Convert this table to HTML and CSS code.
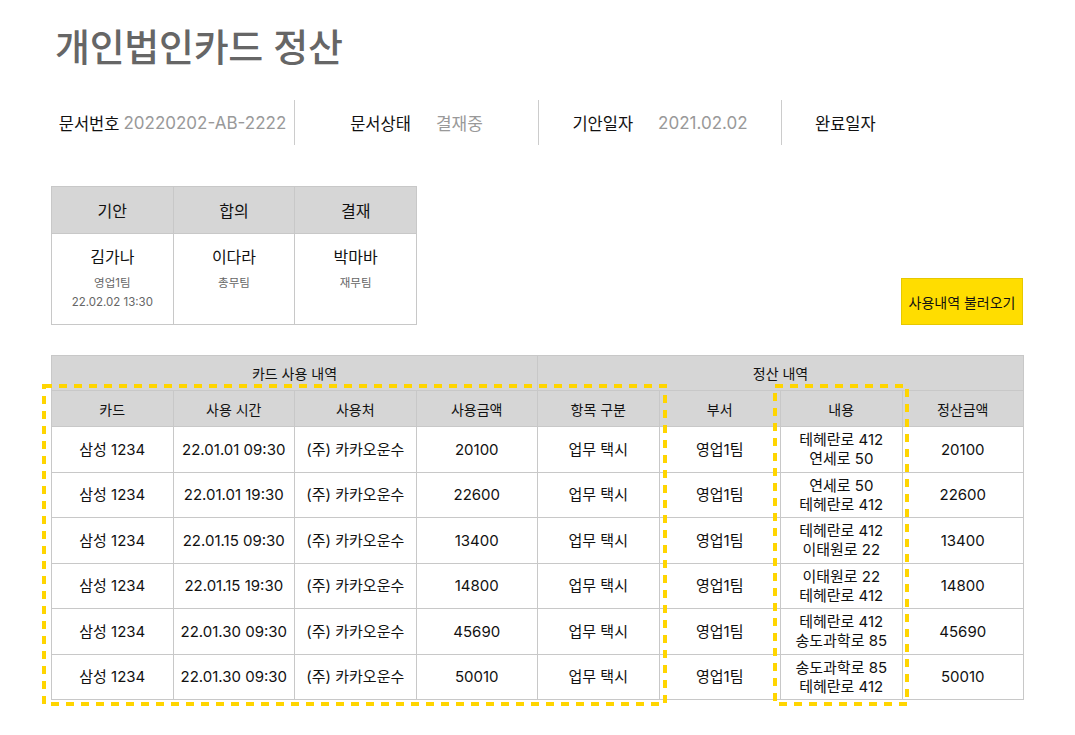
FILE: index.html
```html
<!DOCTYPE html>
<html lang="ko">
<head>
<meta charset="utf-8">
<link rel="stylesheet" href="styles.css">
</head>
<body>
<div class="page">
  <h1 class="title">개인법인카드 정산</h1>

  <div class="info">
    <div class="info-item first"><span class="label">문서번호</span><span class="value">20220202-AB-2222</span></div>
    <div class="info-item"><span class="label">문서상태</span><span class="value">결재중</span></div>
    <div class="info-item"><span class="label">기안일자</span><span class="value">2021.02.02</span></div>
    <div class="info-item last"><span class="label">완료일자</span></div>
  </div>

  <div class="approval-row">
    <table class="approval">
      <thead>
        <tr><th>기안</th><th>합의</th><th>결재</th></tr>
      </thead>
      <tbody>
        <tr>
          <td><div class="name">김가나</div><div class="sub">영업1팀</div><div class="sub">22.02.02 13:30</div></td>
          <td><div class="name">이다라</div><div class="sub">총무팀</div></td>
          <td><div class="name">박마바</div><div class="sub">재무팀</div></td>
        </tr>
      </tbody>
    </table>
    <button class="load-btn">사용내역 불러오기</button>
  </div>

  <div class="main-wrap">
    <table class="main">
      <thead>
        <tr class="group"><th colspan="4">카드 사용 내역</th><th colspan="4">정산 내역</th></tr>
        <tr class="cols"><th>카드</th><th>사용 시간</th><th>사용처</th><th>사용금액</th><th>항목 구분</th><th>부서</th><th>내용</th><th>정산금액</th></tr>
      </thead>
      <tbody>
        <tr><td>삼성 1234</td><td>22.01.01 09:30</td><td>(주) 카카오운수</td><td>20100</td><td>업무 택시</td><td>영업1팀</td><td>테헤란로 412<br>연세로 50</td><td>20100</td></tr>
        <tr><td>삼성 1234</td><td>22.01.01 19:30</td><td>(주) 카카오운수</td><td>22600</td><td>업무 택시</td><td>영업1팀</td><td>연세로 50<br>테헤란로 412</td><td>22600</td></tr>
        <tr><td>삼성 1234</td><td>22.01.15 09:30</td><td>(주) 카카오운수</td><td>13400</td><td>업무 택시</td><td>영업1팀</td><td>테헤란로 412<br>이태원로 22</td><td>13400</td></tr>
        <tr><td>삼성 1234</td><td>22.01.15 19:30</td><td>(주) 카카오운수</td><td>14800</td><td>업무 택시</td><td>영업1팀</td><td>이태원로 22<br>테헤란로 412</td><td>14800</td></tr>
        <tr><td>삼성 1234</td><td>22.01.30 09:30</td><td>(주) 카카오운수</td><td>45690</td><td>업무 택시</td><td>영업1팀</td><td>테헤란로 412<br>송도과학로 85</td><td>45690</td></tr>
        <tr><td>삼성 1234</td><td>22.01.30 09:30</td><td>(주) 카카오운수</td><td>50010</td><td>업무 택시</td><td>영업1팀</td><td>송도과학로 85<br>테헤란로 412</td><td>50010</td></tr>
      </tbody>
    </table>
    <svg class="hl hl-card" width="625" height="322" viewBox="0 0 625 322"><path d="M2 2 H623 V320 H2 Z" fill="none" stroke="#FFD500" stroke-width="4" stroke-dasharray="8 7"/></svg>
    <svg class="hl hl-content" width="136" height="322" viewBox="0 0 136 322"><path d="M2 2 H134 V320 H2 Z" fill="none" stroke="#FFD500" stroke-width="4" stroke-dasharray="8 7"/></svg>
  </div>
</div>
</body>
</html>
```

FILE: styles.css
```css
* { box-sizing: border-box; }
html, body { margin: 0; padding: 0; background: #fff; }
body {
  font-family: Inter, "Noto Sans CJK KR", sans-serif;
  color: #222;
}
.page {
  width: 1075px;
  height: 735px;
  padding: 0 52px 0 51px;
}
.title {
  margin: 0;
  padding: 21px 0 0 4px;
  height: 100px;
  font-family: "Noto Sans CJK KR", sans-serif;
  font-size: 38px;
  line-height: 48px;
  font-weight: 500;
  color: #666;
  letter-spacing: -0.3px;
}
.info {
  display: grid;
  grid-template-columns: 244px 244px 243px 244px;
  height: 45px;
}
.info-item {
  display: flex;
  align-items: center;
  justify-content: center;
  gap: 25px;
  border-right: 1px solid #ccc;
}
.info-item.first { gap: 4px; }
.info-item.last { border-right: none; justify-content: flex-start; padding-left: 33px; }
.label { font-size: 16.5px; font-weight: 400; color: #111; }
.value { font-size: 17px; color: #999; }

.approval-row {
  margin-top: 41px;
  display: flex;
  justify-content: space-between;
  align-items: flex-end;
}
.approval {
  border-collapse: collapse;
  width: 366px;
  table-layout: fixed;
}
.approval th, .approval td {
  border: 1px solid #c8c8c8;
  text-align: center;
}
.approval th {
  background: #d6d6d6;
  height: 47px;
  font-size: 16px;
  font-weight: 400;
  color: #111;
}
.approval td {
  height: 91px;
  vertical-align: top;
  padding-top: 12px;
}
.approval .name { font-size: 16px; line-height: 22px; color: #111; margin-bottom: 6px; }
.approval .sub { font-size: 11.5px; line-height: 19px; color: #666; }

.load-btn {
  width: 122px;
  height: 47px;
  background: #FFDD00;
  border: 1px solid #e6c800;
  font-family: inherit;
  font-size: 14px;
  font-weight: 400;
  color: #111;
  padding: 0;
  cursor: pointer;
}

.main-wrap {
  position: relative;
  margin-top: 30px;
  width: 973px;
}
.main {
  border-collapse: collapse;
  width: 973px;
  table-layout: fixed;
}
.main th, .main td {
  border: 1px solid #c8c8c8;
  text-align: center;
  color: #111;
  padding: 0;
}
.main th { background: #d6d6d6; font-weight: 400; font-size: 14px; }
.main .group th { height: 35px; }
.main .cols th { height: 36px; }
.main td { height: 45.5px; line-height: 19px; font-size: 15px; }

.hl {
  position: absolute;
  top: 29px;
  display: block;
  overflow: visible;
  pointer-events: none;
}
.hl-card { left: -9px; }
.hl-content { left: 722px; }
```
